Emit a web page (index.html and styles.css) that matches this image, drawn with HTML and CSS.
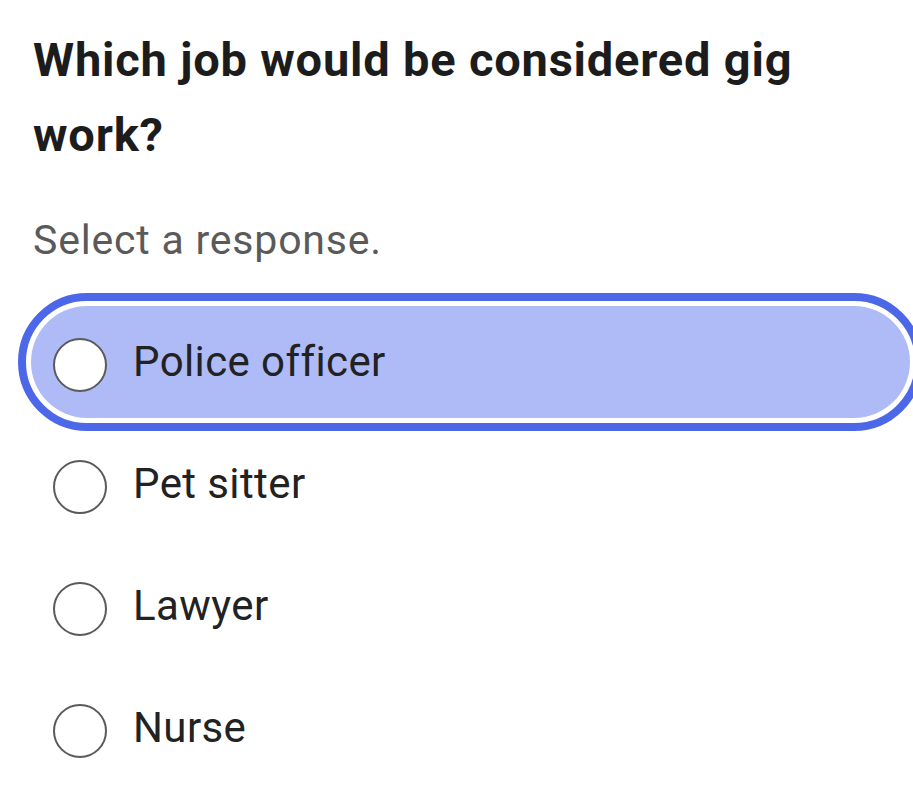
FILE: index.html
```html
<!DOCTYPE html>
<html lang="en">
<head>
<meta charset="utf-8">
<title>Question</title>
<link rel="stylesheet" href="styles.css">
</head>
<body>
<main class="question">
  <h1 class="question-title">Which job would be considered gig work?</h1>
  <p class="question-hint">Select a response.</p>
  <div class="options" role="radiogroup">
    <div class="option option-focused" role="radio" aria-checked="false">
      <span class="radio"></span>
      <span class="option-label">Police officer</span>
    </div>
    <div class="option" role="radio" aria-checked="false">
      <span class="radio"></span>
      <span class="option-label">Pet sitter</span>
    </div>
    <div class="option" role="radio" aria-checked="false">
      <span class="radio"></span>
      <span class="option-label">Lawyer</span>
    </div>
    <div class="option" role="radio" aria-checked="false">
      <span class="radio"></span>
      <span class="option-label">Nurse</span>
    </div>
  </div>
</main>
</body>
</html>
```

FILE: styles.css
```css
html, body {
  margin: 0;
  padding: 0;
  background: #ffffff;
  overflow: hidden;
}

body {
  font-family: Roboto, "Noto Sans", "Liberation Sans", sans-serif;
  color: #1f1f1f;
}

.question {
  padding: 0 0 0 33px;
}

.question-title {
  margin: 22px 0 0 0;
  width: 800px;
  font-size: 47px;
  line-height: 75px;
  font-weight: 700;
  color: #1c1c1c;
  letter-spacing: 0.8px;
}

.question-hint {
  margin: 44px 0 0 0;
  font-size: 41px;
  line-height: 48px;
  color: #5a5a5a;
  font-weight: 400;
  letter-spacing: 0.8px;
}

.options {
  margin: 42px 0 0 -2px;
  width: 879px;
  display: flex;
  flex-direction: column;
  gap: 10px;
}

.option {
  height: 112px;
  border-radius: 56px;
  display: flex;
  align-items: center;
  padding-left: 22px;
  gap: 26px;
  box-sizing: border-box;
}

.option-focused {
  background: #aebbf6;
  outline: 8px solid #4c68e8;
  outline-offset: 5px;
}

.radio {
  width: 54px;
  height: 54px;
  margin-top: 6px;
  box-sizing: border-box;
  border: 2.5px solid #5a5a5a;
  border-radius: 50%;
  background: #ffffff;
  flex: none;
}

.option-label {
  font-size: 42px;
  color: #222222;
  line-height: 48px;
  letter-spacing: 0.4px;
}
```
